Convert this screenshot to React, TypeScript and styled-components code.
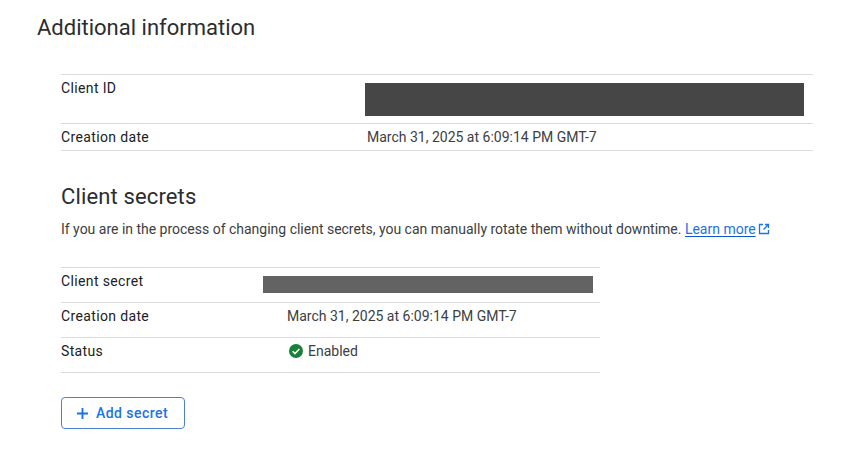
import React from "react";
import styled, { createGlobalStyle } from "styled-components";

const GlobalStyle = createGlobalStyle`
  html, body {
    margin: 0;
    padding: 0;
    background: #fff;
  }
  body {
    font-family: Roboto, "Liberation Sans", sans-serif;
    color: #202124;
  }
`;

export default function App() {
  return (
    <Page>
      <GlobalStyle />
      <PageTitle>Additional information</PageTitle>
      <Content>
        <Table>
          <Row $columns="306px 1fr" $height={48}>
            <Label>Client ID</Label>
            <Redaction $offset={-2} $width={439} $height={33} $color="#464646" />
          </Row>
          <Row $columns="306px 1fr" $height={26} $last>
            <Label>Creation date</Label>
            <Value>March 31, 2025 at 6:09:14 PM GMT-7</Value>
          </Row>
        </Table>

        <SectionTitle>Client secrets</SectionTitle>
        <Description>
          If you are in the process of changing client secrets, you can manually rotate them
          without downtime.{" "}
          <LearnMore href="#">Learn more</LearnMore>
          <ExternalIcon viewBox="0 0 12 12" aria-hidden="true">
            <path d="M5 1.5H1.5v9h9V7" />
            <path d="M7 1.5h3.5V5M10.5 1.5 5.5 6.5" />
          </ExternalIcon>
        </Description>

        <SecretsTable>
          <Row $columns="226px 1fr" $height={34}>
            <Label>Client secret</Label>
            <Redaction $offset={-24} $width={330} $height={17} $color="#636363" />
          </Row>
          <Row $columns="226px 1fr" $height={34}>
            <Label>Creation date</Label>
            <Value>March 31, 2025 at 6:09:14 PM GMT-7</Value>
          </Row>
          <Row $columns="226px 1fr" $height={34} $last>
            <Label>Status</Label>
            <Status>
              <CheckIcon viewBox="0 0 24 24" aria-hidden="true">
                <circle cx="12" cy="12" r="12" fill="#188038" />
                <path d="M6.2 12.4 10.2 16.4 17.8 8.6" fill="none" stroke="#fff" strokeWidth="2.6" />
              </CheckIcon>
              Enabled
            </Status>
          </Row>
        </SecretsTable>

        <AddButton type="button">
          <PlusIcon viewBox="0 0 14 14" aria-hidden="true">
            <path d="M7 1v12M1 7h12" />
          </PlusIcon>
          Add secret
        </AddButton>
      </Content>
    </Page>
  );
}

const Page = styled.div`
  width: 847px;
  height: 460px;
  overflow: hidden;
  padding: 14px 0 0 37px;
  box-sizing: border-box;
`;

const PageTitle = styled.h1`
  margin: 0;
  font-size: 22px;
  font-weight: 400;
  line-height: 28px;
  color: #2b2d30;
`;

const Content = styled.div`
  width: 752px;
  margin: 32px 0 0 24px;
`;

const Table = styled.div`
  font-size: 14px;
`;

const SecretsTable = styled(Table)`
  width: 539px;
  margin-top: 28px;
`;

const Row = styled.div<{ $columns: string; $height: number; $last?: boolean }>`
  display: grid;
  grid-template-columns: ${(p) => p.$columns};
  height: ${(p) => p.$height}px;
  border-top: 1px solid #dadce0;
  border-bottom: ${(p) => (p.$last ? "1px solid #dadce0" : "none")};
`;

const Label = styled.div`
  padding-top: 3px;
  line-height: 20px;
  letter-spacing: 0.36px;
  color: #202124;
`;

const Value = styled.div`
  padding-top: 3px;
  line-height: 20px;
  color: #3c4043;
`;

const Redaction = styled.div<{ $offset: number; $width: number; $height: number; $color: string }>`
  margin: 8px 0 0 ${(p) => p.$offset}px;
  width: ${(p) => p.$width}px;
  height: ${(p) => p.$height}px;
  background: ${(p) => p.$color};
`;

const SectionTitle = styled.h2`
  margin: 32px 0 0;
  font-size: 22px;
  font-weight: 400;
  line-height: 28px;
  letter-spacing: 0.14px;
  color: #2b2d30;
`;

const Description = styled.p`
  margin: 8px 0 0;
  font-size: 14px;
  line-height: 20px;
  letter-spacing: -0.008px;
  color: #3c4043;
`;

const LearnMore = styled.a`
  color: #1a73e8;
  text-decoration: underline #0b57d0;
  text-underline-offset: 2px;
`;

const ExternalIcon = styled.svg`
  width: 12px;
  height: 12px;
  margin-left: 2px;
  vertical-align: -1px;
  fill: none;
  stroke: #1a73e8;
  stroke-width: 1.3;
`;

const Status = styled(Value)`
  display: flex;
  align-items: flex-start;
  gap: 5px;
  margin-left: 2px;
`;

const CheckIcon = styled.svg`
  width: 14px;
  height: 14px;
  margin-top: 3px;
`;

const AddButton = styled.button`
  display: flex;
  align-items: center;
  gap: 7px;
  box-sizing: border-box;
  width: 124px;
  height: 32px;
  margin-top: 24px;
  padding: 0 0 0 14px;
  background: #fff;
  border: 1px solid #4a80d6;
  border-radius: 4px;
  color: #1a73e8;
  font-family: inherit;
  font-size: 14px;
  font-weight: 500;
  letter-spacing: 0.45px;
`;

const PlusIcon = styled.svg`
  width: 13px;
  height: 13px;
  fill: none;
  stroke: #1a73e8;
  stroke-width: 2;
`;
